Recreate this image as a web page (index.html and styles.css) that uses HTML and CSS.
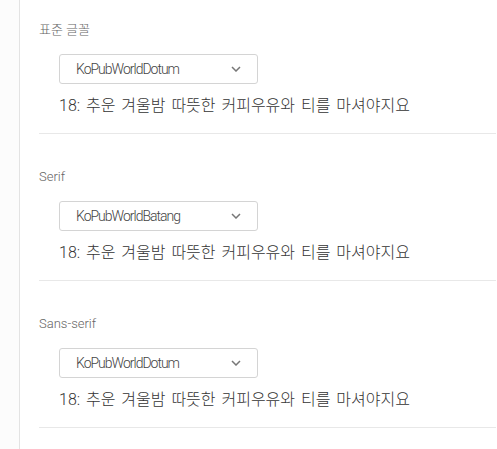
FILE: index.html
```html
<!DOCTYPE html>
<html lang="ko">
<head>
<meta charset="utf-8">
<link rel="stylesheet" href="styles.css">
</head>
<body>
<div class="page">
  <div class="gutter"></div>
  <div class="content">
    <section class="group first">
      <div class="label">표준 글꼴</div>
      <div class="select"><span>KoPubWorldDotum</span><svg class="chev" width="10" height="6" viewBox="0 0 10 6"><path d="M1 1 L5 5 L9 1" fill="none" stroke="#777" stroke-width="1.5"/></svg></div>
      <div class="sample">18: 추운 겨울밤 따뜻한 커피우유와 티를 마셔야지요</div>
    </section>
    <section class="group">
      <div class="label">Serif</div>
      <div class="select"><span>KoPubWorldBatang</span><svg class="chev" width="10" height="6" viewBox="0 0 10 6"><path d="M1 1 L5 5 L9 1" fill="none" stroke="#777" stroke-width="1.5"/></svg></div>
      <div class="sample">18: 추운 겨울밤 따뜻한 커피우유와 티를 마셔야지요</div>
    </section>
    <section class="group">
      <div class="label">Sans-serif</div>
      <div class="select"><span>KoPubWorldDotum</span><svg class="chev" width="10" height="6" viewBox="0 0 10 6"><path d="M1 1 L5 5 L9 1" fill="none" stroke="#777" stroke-width="1.5"/></svg></div>
      <div class="sample">18: 추운 겨울밤 따뜻한 커피우유와 티를 마셔야지요</div>
    </section>
  </div>
</div>
</body>
</html>
```
FILE: styles.css
```css
html, body {
  margin: 0;
  padding: 0;
  background: #ffffff;
}
body {
  font-family: Roboto, "Noto Sans CJK KR", sans-serif;
  font-weight: 300;
  color: #333;
}
.page {
  display: flex;
  height: 449px;
  overflow: hidden;
}
.gutter {
  width: 19px;
  flex: none;
  background: #fcfcfc;
  border-right: 1px solid #e3e3e3;
}
.content {
  flex: 1;
  padding-left: 19px;
  padding-right: 1px;
}
.group {
  border-bottom: 1px solid #e8e8e8;
  padding-top: 33px;
  padding-bottom: 12px;
}
.group.first {
  padding-top: 20px;
}
.label {
  font-size: 13px;
  line-height: 20px;
  color: #666;
}
.select {
  margin-top: 14px;
  margin-left: 20px;
  width: 199px;
  height: 30px;
  box-sizing: border-box;
  border: 1px solid #d4d4d4;
  border-radius: 3px;
  display: flex;
  align-items: center;
  padding-left: 16px;
  padding-right: 16px;
  font-size: 14px;
  letter-spacing: -1px;
  color: #444;
}
.select span {
  flex: 1;
}
.chev {
  display: block;
}
.sample {
  margin-left: 20px;
  margin-top: 7px;
  font-size: 16px;
  line-height: 30px;
  word-spacing: 2px;
  color: #333;
}
```
